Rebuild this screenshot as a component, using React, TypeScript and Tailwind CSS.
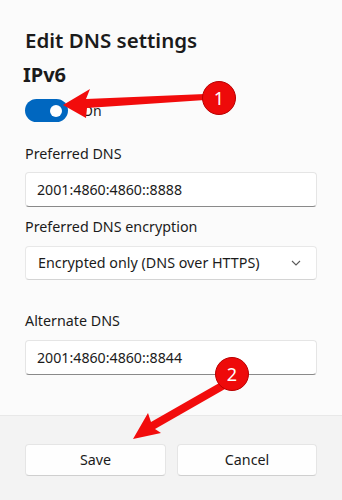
export default function App() {
  return (
    <div
      className="relative w-[342px] h-[500px] overflow-hidden bg-[#fbfbfb] flex flex-col text-[#1b1b1b]"
      style={{ fontFamily: '"Noto Sans", "Open Sans", sans-serif' }}
    >
      <div className="flex-1 px-[25px] pt-[26px]">
        <h1 className="text-[20.5px] leading-[28px] font-semibold">Edit DNS settings</h1>
        <h2 className="mt-[7px] text-[20px] leading-[28px] font-bold -ml-[2px]">IPv6</h2>

        <div className="mt-[10px] flex items-center gap-[14px]">
          <div className="w-[43px] h-[23px] rounded-full bg-[#0067c0] flex items-center justify-end pr-[6px]">
            <div className="w-[12px] h-[12px] rounded-full bg-white" />
          </div>
          <span className="text-[14px] leading-[20px]">On</span>
        </div>

        <div className="mt-[22px] text-[14.3px] leading-[20px]">Preferred DNS</div>
        <div className="mt-[8px] h-[35px] rounded-[4px] bg-white border border-[#e5e5e5] border-b-[#8a8a8a] flex items-center px-[11px] text-[14.2px]">
          2001:4860:4860::8888
        </div>

        <div className="mt-[10px] text-[14.3px] leading-[20px]">Preferred DNS encryption</div>
        <div className="mt-[9px] h-[34px] rounded-[4px] bg-white border border-[#e8e8e8] border-b-[#d4d4d4] flex items-center justify-between pl-[12px] pr-[15px] text-[14.3px]">
          <span>Encrypted only (DNS over HTTPS)</span>
          <svg width="10" height="6" viewBox="0 0 10 6" fill="none">
            <path d="M1 1l4 4 4-4" stroke="#5a5a5a" strokeWidth="1.1" />
          </svg>
        </div>

        <div className="mt-[31px] text-[14.3px] leading-[20px]">Alternate DNS</div>
        <div className="mt-[9px] h-[35px] rounded-[4px] bg-white border border-[#e5e5e5] border-b-[#8a8a8a] flex items-center px-[11px] text-[14.2px]">
          2001:4860:4860::8844
        </div>
      </div>

      <div className="h-[85px] bg-[#f3f3f3] border-t border-[#e8e8e8] px-[25px] pt-[28px] flex gap-[11px]">
        <button className="w-[141px] h-[32px] rounded-[4px] bg-[#fefefe] border border-[#e5e5e5] border-b-[#cfcfcf] text-[14.3px]">
          Save
        </button>
        <button className="w-[140px] h-[32px] rounded-[4px] bg-[#fefefe] border border-[#e5e5e5] border-b-[#cfcfcf] text-[14.3px]">
          Cancel
        </button>
      </div>

      {/* annotation arrows */}
      <svg className="absolute inset-0 pointer-events-none" width="342" height="500" viewBox="0 0 342 500">
        <polygon points="63,105 90,89 86,99 205,94 205,100 87,108 86,118" fill="#f20c0c" />
        <circle cx="219" cy="98" r="16.5" fill="#ee0a0a" stroke="#b80000" strokeWidth="1" />
        <text x="219" y="104.5" textAnchor="middle" fill="white" fontSize="18" fontFamily="Noto Sans, sans-serif">1</text>

        <polygon points="133,439 148,413 151,422 221,382 225,389 155,429 161,433" fill="#f20c0c" />
        <circle cx="232" cy="374" r="16.5" fill="#ee0a0a" stroke="#b80000" strokeWidth="1" />
        <text x="232" y="380.5" textAnchor="middle" fill="white" fontSize="18" fontFamily="Noto Sans, sans-serif">2</text>
      </svg>
    </div>
  );
}
